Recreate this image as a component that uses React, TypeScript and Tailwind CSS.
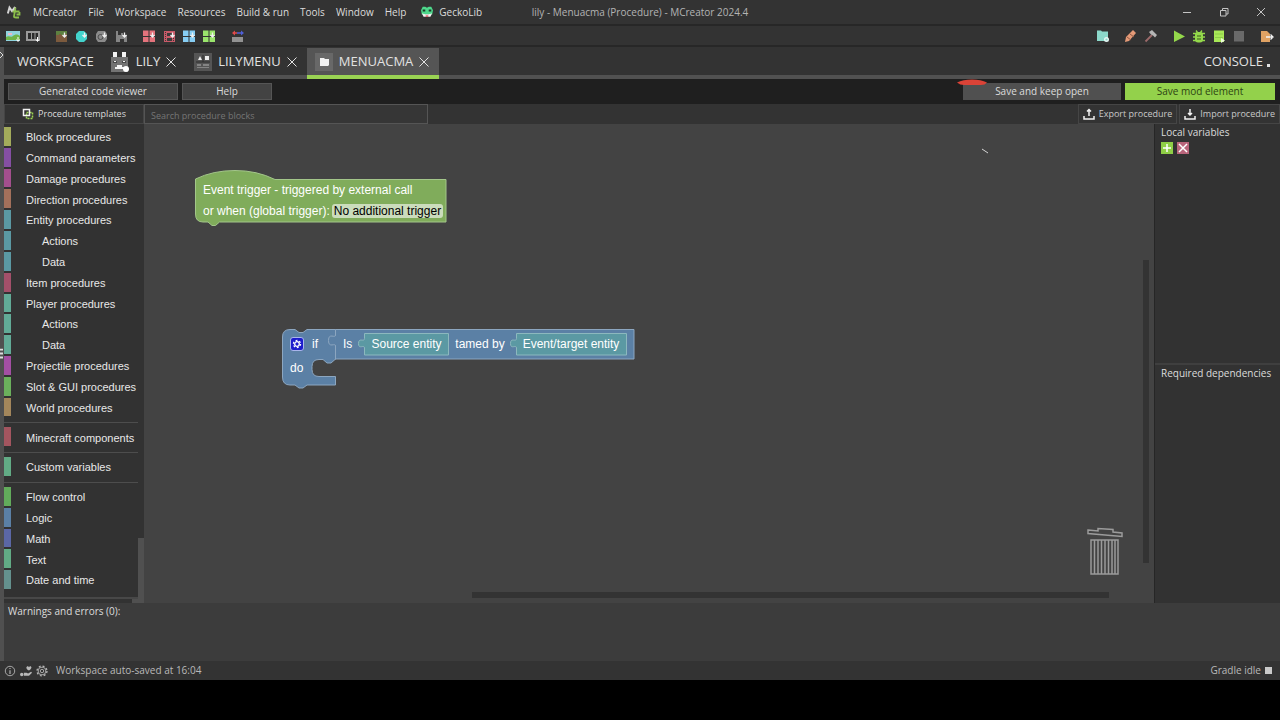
import React from 'react';
import clsx from 'clsx';

const MENU = ['MCreator', 'File', 'Workspace', 'Resources', 'Build & run', 'Tools', 'Window', 'Help'];

interface Category {
  name: string;
  color: string;
  nested?: boolean;
}

const CATEGORY_GROUPS: Category[][] = [
  [
    { name: 'Block procedures', color: 'bg-[#a3ab5b]' },
    { name: 'Command parameters', color: 'bg-[#854fa3]' },
    { name: 'Damage procedures', color: 'bg-[#a34f8d]' },
    { name: 'Direction procedures', color: 'bg-[#a3705b]' },
    { name: 'Entity procedures', color: 'bg-[#5b99a3]' },
    { name: 'Actions', color: 'bg-[#5b99a3]', nested: true },
    { name: 'Data', color: 'bg-[#5b99a3]', nested: true },
    { name: 'Item procedures', color: 'bg-[#a3506a]' },
    { name: 'Player procedures', color: 'bg-[#62ab97]' },
    { name: 'Actions', color: 'bg-[#62ab97]', nested: true },
    { name: 'Data', color: 'bg-[#62ab97]', nested: true },
    { name: 'Projectile procedures', color: 'bg-[#a34fa3]' },
    { name: 'Slot & GUI procedures', color: 'bg-[#6bb05c]' },
    { name: 'World procedures', color: 'bg-[#a3865b]' },
  ],
  [{ name: 'Minecraft components', color: 'bg-[#a3555f]' }],
  [{ name: 'Custom variables', color: 'bg-[#62ab85]' }],
  [
    { name: 'Flow control', color: 'bg-[#62ab5b]' },
    { name: 'Logic', color: 'bg-[#5b80a5]' },
    { name: 'Math', color: 'bg-[#5b67a5]' },
    { name: 'Text', color: 'bg-[#62ab85]' },
    { name: 'Date and time', color: 'bg-[#64918e]' },
  ],
];

interface IconProps {
  children: React.ReactNode;
  className?: string;
}

const Icon: React.FC<IconProps> = ({ children, className = 'w-3.5 h-3.5' }) => (
  <svg viewBox="0 0 14 14" className={clsx('shrink-0', className)} fill="none" aria-hidden="true">
    {children}
  </svg>
);

// small white download arrow in the corner of the import icons
const Arrow = () => <path d="M10.5 3.5v4M8.500 6l2 2 2-2" stroke="#f0f0f0" strokeWidth="1.300" />;

const tiles = (fill: string) => (
  <path d="M1 1.500h5.500V7H1zM7.500 1.500H13V7H7.500zM1 8h5.500v5H1zM7.500 8H13v5H7.500z" fill={fill} />
);

const LEFT_TOOLS: { label: string; icon: React.ReactNode }[][] = [
  [
    {
      label: 'Import texture',
      icon: (
        <>
          <path d="M0 2h14v10H0z" fill="#8fd3de" />
          <path d="M0 8c3-2 5 1 7-1s5-2 7 0v4H0z" fill="#6fb548" />
          <path d="M2 4h4v2H2z" fill="#e8b9c6" />
          <path d="M12 8v4M10.500 10.500l1.500 2 1.500-2" stroke="#fff" />
        </>
      ),
    },
    {
      label: 'Import animation',
      icon: (
        <>
          <path d="M0 2h14v10H0z" fill="#9a9a9a" />
          <path d="M2 4h3v6H2zM6 4h2.500v6H6zM9.500 4H12v6H9.500z" fill="#2c2c2c" />
          <path d="M11.500 8v4M10 10.500l1.500 2 1.500-2" stroke="#fff" />
        </>
      ),
    },
  ],
  [
    {
      label: 'Import block',
      icon: (
        <>
          <path d="M2 2h11v11H2z" fill="#7c5a3d" />
          <path d="M2 2h11v3h-3v1H7V5H5v1H2z" fill="#5d8040" />
          <Arrow />
        </>
      ),
    },
    {
      label: 'Import item',
      icon: (
        <>
          <path d="M5 2h5l3 3v5l-3 3H5L2 10V5z" fill="#43d3cc" />
          <Arrow />
        </>
      ),
    },
    {
      label: 'Import sound',
      icon: (
        <>
          <path d="M4 2h7l2 3v5l-2 3H4l-2-3V5z" fill="#8b8b8b" />
          <circle cx="6.500" cy="8" r="2.500" stroke="#4b4b4b" />
          <Arrow />
        </>
      ),
    },
    {
      label: 'Import structure',
      icon: (
        <>
          <path d="M2 2h2v4h3V4h2v2h4v7h-3v-3H6v3H2z" fill="#858585" />
          <Arrow />
        </>
      ),
    },
  ],
  [
    { label: 'Import model', icon: <>{tiles('#e4737c')}<Arrow /></> },
    {
      label: 'Import Java model',
      icon: (
        <>
          <path d="M2 2h11v11H2z" fill="#c95a68" />
          <path d="M5 4h5v3H5zM5 9h5v3H5z" fill="#3b3b3b" />
          <path d="M3.500 3v10M11.500 9v4" stroke="#3b3b3b" strokeDasharray="1 1" />
          <Arrow />
        </>
      ),
    },
    { label: 'Import JSON model', icon: <>{tiles('#86cdf3')}<Arrow /></> },
    { label: 'Import OBJ model', icon: <>{tiles('#9ae56c')}<Arrow /></> },
  ],
  [
    {
      label: 'Animation mapping',
      icon: (
        <>
          <path d="M2 8h11v5H2z" fill="#929292" />
          <path d="M4 4h3" stroke="#e24b4b" strokeWidth="1.500" />
          <path d="M7 4h4" stroke="#5060d8" strokeWidth="1.500" />
          <path d="M5 1.500 2 4l3 2.500z" fill="#e24b4b" />
          <path d="m11 1.500 3 2.500-3 2.500z" fill="#5060d8" />
        </>
      ),
    },
  ],
];

const RIGHT_TOOLS: { label: string; icon: React.ReactNode }[][] = [
  [
    {
      label: 'Workspace settings',
      icon: (
        <>
          <path d="M1 1.500h4l1 1h6v9.500H1z" fill="#8cd9cb" />
          <circle cx="10.500" cy="10.500" r="1.800" stroke="#e8f7f4" strokeWidth="1.400" />
        </>
      ),
    },
  ],
  [
    {
      label: 'Clean',
      icon: (
        <>
          <path d="m9 1 3 3-7 8-4 1 1-5z" fill="#e59a77" />
          <path d="m3 8 4 3M6 5l4 3" stroke="#8f5a44" />
        </>
      ),
    },
    {
      label: 'Build',
      icon: (
        <>
          <path d="M1.500 12.500 8 6" stroke="#9c6a6a" strokeWidth="1.800" />
          <path d="m5 3 3-2 5 5-2 2.500-2-2-2-1z" fill="#b5b5b5" />
        </>
      ),
    },
  ],
  [
    { label: 'Run client', icon: <path d="M2 1.500v11.500l11-5.500z" fill="#94d84b" /> },
    {
      label: 'Debug client',
      icon: (
        <>
          <path d="M1 4.500h12M1 8h12M1 11.500h12M4 1.500l1.500 2M10 1.500l-1.500 2" stroke="#94d84b" strokeWidth="1.300" />
          <rect x="3" y="3" width="8" height="10.500" rx="3" fill="#94d84b" />
          <path d="M5 7h4M5 10h4" stroke="#3a5a1c" />
        </>
      ),
    },
    {
      label: 'Run server',
      icon: (
        <>
          <path d="M2 1.500h10V13H2z" fill="#a8e857" />
          <path d="M3 5h8M3 8.500h8" stroke="#8ccb48" />
          <path d="m9 9 4 2.500L9 14z" fill="#eafbd6" />
        </>
      ),
    },
    { label: 'Stop', icon: <path d="M2 2h10v10.500H2z" fill="#6a6a6a" /> },
  ],
  [
    {
      label: 'Export mod',
      icon: (
        <>
          <path d="M1 2h6l3 3v8H1z" fill="#e0a263" />
          <path d="M6 8h6M10.500 5.500 13 8l-2.500 2.500" stroke="#f4f4f4" strokeWidth="1.300" />
        </>
      ),
    },
  ],
];

const ToolGroups = ({ groups }: { groups: typeof LEFT_TOOLS }) => (
  <div className="flex items-center gap-3.5">
    {groups.map((group, i) => (
      <div key={i} className="flex gap-1.5">
        {group.map((tool) => (
          <button key={tool.label} aria-label={tool.label}>
            <Icon>{tool.icon}</Icon>
          </button>
        ))}
      </div>
    ))}
  </div>
);

const TitleBar = () => (
  <header className="relative flex items-center h-[26px] pl-[7px] border-b-2 border-[#272727] text-[10px] text-[#dcdcdc]">
    <Icon className="w-3.5 h-3.5">
      <path d="M.8 8.500 2.500 2.500 5 6l3-4-1 5" stroke="#d5d5d5" strokeWidth="2" />
      <path d="M8.500 2.500 7 11.500q0 1 2 1h3M5.500 6.500h7M9.500 9.500h3V7" stroke="#8bbd4a" strokeWidth="1.800" />
    </Icon>
    <nav className="flex items-center gap-[11px] ml-3">
      {MENU.map((item) => (
        <button key={item}>{item}</button>
      ))}
      <button className="flex items-center gap-1.5 pl-1">
        <Icon className="w-3 h-3">
          <path d="M2 1h3l2 1 2-1h3l2 4-1 5H1L0 5z" fill="#4fd98c" />
          <path d="M1 8.500c3 1.500 9 1.500 12 0l-2 4H3z" fill="#f2f2f2" />
          <path d="M2 4h3v2.500H2zM9 4h3v2.500H9z" fill="#1b3d2a" />
          <path d="M5.500 11h3v1.500h-3z" fill="#d9484f" />
        </Icon>
        GeckoLib
      </button>
    </nav>
    <h1 className="absolute inset-y-0 left-1/2 -translate-x-1/2 flex items-center text-[#b4b4b4] pointer-events-none">
      lily - Menuacma (Procedure) - MCreator 2024.4
    </h1>
    <div className="flex gap-[27px] ml-auto pr-3.5 text-[#c4c4c4]">
      <button aria-label="Minimize">
        <svg viewBox="0 0 10 10" className="w-2.5 h-2.5" stroke="currentColor"><path d="M1 5.500h8" /></svg>
      </button>
      <button aria-label="Restore">
        <svg viewBox="0 0 10 10" className="w-2.5 h-2.5" stroke="currentColor" fill="none">
          <path d="M1.500 3.500h5.500v5.500H1.500zM3.500 3.500v-2H9V7H7" />
        </svg>
      </button>
      <button aria-label="Close">
        <svg viewBox="0 0 10 10" className="w-2.5 h-2.5" stroke="currentColor"><path d="m1 1 8 8M9 1 1 9" /></svg>
      </button>
    </div>
  </header>
);

interface TabProps {
  label: string;
  active?: boolean;
  children: React.ReactNode;
}

const Tab: React.FC<TabProps> = ({ label, active, children }) => (
  <div
    className={clsx(
      'flex items-center gap-1.5 pl-2 pr-2.5 border-b-4',
      active ? 'bg-[#555555] border-[#9ad353]' : 'border-[#515151]'
    )}
  >
    <button className="flex items-center gap-1.5">
      {children}
      {label}
    </button>
    <button aria-label={`Close ${label}`}>
      <svg viewBox="0 0 10 10" className="w-2.5 h-2.5" stroke="currentColor"><path d="m.5.5 9 9M9.500.5l-9 9" /></svg>
    </button>
  </div>
);

const Tabs = () => (
  <div className="flex h-[31px] text-[13px] text-[#e2e2e2]">
    <button className="pl-[13px] pr-2 border-b-4 border-[#515151]">WORKSPACE</button>
    <Tab label="LILY">
      <svg viewBox="0 0 20 20" className="w-5 h-5" aria-hidden="true">
        <path d="M1 5h17v15H1z" fill="#737373" />
        <path d="M3 0h4v5H3zM12 0h4v5h-4z" fill="#f4f4f4" />
        <path d="M3 9h4v2H3zM12 9h4v2h-4z" fill="#4a4a4a" />
        <path d="M4 9h2v1H4zM13 9h2v1h-2zM7 13h5v2h2v2H5v-2h2z" fill="#f4f4f4" />
        <circle cx="16" cy="17" r="3" fill="#fff" />
      </svg>
    </Tab>
    <Tab label="LILYMENU">
      <svg viewBox="0 0 18 18" className="w-[18px] h-[18px]" aria-hidden="true">
        <path d="M0 0h18v18H0z" fill="#555" />
        <path d="M4 7l2-4 2 4zM11 3h4v4h-4z" fill="#ececec" />
        <path d="M2 9h14M9 2v7" stroke="#2d2d2d" />
        <path d="M3 11h4v2H3zM9 11h6v2H9zM3 14h12v1H3z" fill="#848484" />
      </svg>
    </Tab>
    <Tab label="MENUACMA" active>
      <svg viewBox="0 0 18 18" className="w-[18px] h-[18px]" aria-hidden="true">
        <path d="M0 0h18v18H0z" fill="#686868" />
        <path d="M5 5h4l1 1h4v6l-1 1H5z" fill="#f2f2f2" />
      </svg>
    </Tab>
    <div className="flex-1 border-b-4 border-[#515151]" />
    <button className="flex items-center gap-1 pl-3 pr-2.5 border-b-4 border-[#515151]">
      CONSOLE
      <span className="w-[3px] h-[3px] mt-2 bg-[#e2e2e2]" />
    </button>
  </div>
);

const ActionBar = () => (
  <div className="flex h-[25px] gap-1 pt-1 pb-1 pl-1 pr-[5px] bg-[#1f1f1f] text-[10px] text-[#dcdcdc]">
    <button className="w-[170px] bg-[#434343] border border-[#555555]">Generated code viewer</button>
    <button className="w-[90px] bg-[#434343] border border-[#555555]">Help</button>
    <div className="relative ml-auto flex">
      <button className="w-[158px] bg-[#505050]">Save and keep open</button>
      <svg viewBox="0 0 30 7" className="absolute -left-1.5 -top-1 w-[30px] h-[7px]" aria-hidden="true">
        <path d="M0 3.500Q6 .5 15 .5t15 3Q28 6 24 6H7Q3 6 0 3.500z" fill="#db4337" />
      </svg>
    </div>
    <button className="w-[150px] bg-[#93d14b] text-[#2d4313]">Save mod element</button>
  </div>
);

const FilterBar = () => (
  <div className="flex h-5 text-[9px] text-[#c9c9c9]">
    <button className="flex items-center justify-center gap-1 w-[140px] border border-[#454545] text-[#dcdcdc]">
      <svg viewBox="0 0 12 12" className="w-3 h-3" fill="none" aria-hidden="true">
        <path d="M4.500 4.500h6v6h-6z" stroke="#9ad353" strokeWidth="1.500" strokeDasharray="2 1" />
        <path d="M1.500 1.500h6v6h-6z" stroke="#f2f2f2" strokeWidth="1.500" />
      </svg>
      Procedure templates
    </button>
    <input
      aria-label="Search procedure blocks"
      placeholder="Search procedure blocks"
      className="w-[284px] px-1.5 pt-1 bg-[#363636] border border-[#555555] outline-none placeholder:text-[#757575]"
    />
    <button className="flex items-center gap-1 ml-auto px-1 border border-[#454545]">
      <svg viewBox="0 0 12 12" className="w-3 h-3" fill="none" stroke="#f2f2f2" strokeWidth="1.500" aria-hidden="true">
        <path d="M1 8v3h10V8M6 8V2M4 3.500l2-2 2 2" />
      </svg>
      Export procedure
    </button>
    <button className="flex items-center gap-1 ml-0.5 px-1 border border-[#454545]">
      <svg viewBox="0 0 12 12" className="w-3 h-3" fill="none" stroke="#f2f2f2" strokeWidth="1.500" aria-hidden="true">
        <path d="M1 8v3h10V8M6 1v6M4 5l2 2 2-2" />
      </svg>
      Import procedure
    </button>
  </div>
);

const Toolbox = () => (
  <aside className="relative flex flex-col w-[140px] pt-[3px] pb-3 bg-[#323232] font-['Liberation_Sans',sans-serif] text-[11px] text-[#e8e8e8]">
    {CATEGORY_GROUPS.map((group, i) => (
      <React.Fragment key={i}>
        {i > 0 && (
          <div className="flex items-center h-[9px]">
            <hr className="w-[134px] border-[#4d4d4d]" />
          </div>
        )}
        {group.map((category, j) => (
          <button key={j} className="flex flex-1 items-stretch min-h-5 text-left whitespace-nowrap">
            <span className={clsx('shrink-0 w-[7px] mb-0.5', category.color)} />
            <span className={clsx('self-center', category.nested ? 'pl-[31px]' : 'pl-[15px]')}>{category.name}</span>
          </button>
        ))}
      </React.Fragment>
    ))}
    <div className="absolute left-0 bottom-1 w-[134px] h-0.5 bg-[#484848]" />
    <div className="absolute right-0 bottom-0 w-1.5 h-[65px] bg-[#505050]" />
    <div className="absolute right-0 bottom-0 w-3 h-1 bg-[#505050]" />
  </aside>
);

// Blocks are nodes on the free canvas, so they carry their own coordinates
const Canvas = () => (
  <main className="relative flex-1 overflow-hidden bg-[#434343] font-['Liberation_Sans',sans-serif] text-[12px] text-white">
    <div className="absolute left-[51px] top-[46px] w-[252px] h-[57px]">
      <svg viewBox="0 0 252 57" className="absolute inset-0 w-full h-full" aria-hidden="true">
        <path
          d="M.5 9Q18 .5 40 .5T80 9.500H251V52H24.500l-4 3.500h-3.500L13 52H8Q.5 52 .5 44z"
          fill="#80ac5b"
          stroke="#a3c68a"
        />
      </svg>
      <div className="relative flex flex-col gap-[5px] pt-3 pl-2 whitespace-nowrap">
        <span className="leading-4">Event trigger - triggered by external call</span>
        <div className="flex items-center gap-0.5 leading-4">
          <span>or when (global trigger):</span>
          <button className="px-0.5 h-3.5 leading-3.5 rounded-[3px] bg-[#cbdcbc] text-black">No additional trigger</button>
        </div>
      </div>
    </div>

    <div className="absolute left-[138px] top-[205px] w-[353px] h-[60px]">
      <svg viewBox="0 0 353 60" className="absolute inset-0 w-full h-full" fill="#5b80a5" stroke="#8ca6c0" aria-hidden="true">
        <path d="M8 .5h5l4 3h4l4-3H53.500V30.500H53l-4 3.500h-4l-4-3.500h-4q-7 0-7 7v3q0 7 7 7H53.500V56H25l-4 3h-4l-4-3H8Q.5 56 .5 48V8Q.5 .5 8 .5z" />
        <path d="M53.500.5H352V30H53.500V17c0-4-7 3-7-5.500s7-1.500 7-5.500z" />
        <g fill="#5b99a3" stroke="#8cb8be">
          <path d="M82.500 4.500H166.500V26H82.500V19c0-4-6 2-6-4.500s6-1 6-5z" />
          <path d="M234.500 4.500H344.500V26H234.500V19c0-4-6 2-6-4.500s6-1 6-5z" />
        </g>
      </svg>
      <div className="relative flex items-center h-[30px] pl-2 whitespace-nowrap">
        <button aria-label="Edit if block">
          <svg viewBox="0 0 14 14" className="w-3.5 h-3.5" aria-hidden="true">
            <rect x=".5" y=".5" width="13" height="13" rx="2.500" fill="#1c1ccc" stroke="#a9b5ec" />
            <circle cx="7" cy="7" r="2.300" fill="none" stroke="#fff" strokeWidth="1.300" />
            <circle cx="7" cy="7" r="3.600" fill="none" stroke="#fff" strokeWidth="1.200" strokeDasharray="1.900 1.870" />
          </svg>
        </button>
        <span className="w-8 pl-2">if</span>
        <span className="w-[29px] pl-[7px]">Is</span>
        <span className="w-[83px] text-center">Source entity</span>
        <span className="w-[68px] pr-1 text-center">tamed by</span>
        <span className="w-[110px] text-center">Event/target entity</span>
      </div>
      <span className="relative block pl-2">do</span>
    </div>

    <svg viewBox="0 0 8 6" className="absolute right-[165px] top-6 w-2 h-1.5" stroke="#d5d5d5" aria-hidden="true">
      <path d="m1 1 6 4" />
    </svg>
    <svg viewBox="0 0 36 48" className="absolute right-[31px] bottom-7 w-9 h-12" fill="none" stroke="#9b9b9b" aria-hidden="true">
      <path d="m1 3 10 1V1.500l15 1V5l9 1v3.500L1 6.500z" strokeWidth="1.500" />
      <path d="M4 13h27v34H4z" strokeWidth="1.500" />
      <path d="M7.500 13v34M11 13v34M14.500 13v34M18 13v34M21.500 13v34M25 13v34M28 13v34" strokeWidth="1.500" />
    </svg>
    <div className="absolute right-[5px] top-[136px] bottom-10 w-1.5 bg-[#333333]" />
    <div className="absolute left-[328px] right-[45px] bottom-[5px] h-1.5 bg-[#333333]" />
  </main>
);

const SidePanel = () => (
  <aside className="flex flex-col w-[126px] border-l border-[#262626] bg-[#323232] text-[10px] text-[#dcdcdc]">
    <section className="flex-1 pl-1.5 border-b-2 border-[#3f3f3f]">
      <h2 className="leading-4">Local variables</h2>
      <div className="flex gap-1 pt-0.5">
        <button aria-label="Add variable">
          <svg viewBox="0 0 12 12" className="w-3 h-3" aria-hidden="true">
            <path d="M0 0h12v12H0z" fill="#8fce46" />
            <path d="M6 2v8M2 6h8" stroke="#fff" strokeWidth="1.500" />
          </svg>
        </button>
        <button aria-label="Remove variable">
          <svg viewBox="0 0 12 12" className="w-3 h-3" aria-hidden="true">
            <path d="M0 0h12v12H0z" fill="#b8647a" />
            <path d="m2 2 8 8M10 2l-8 8" stroke="#fff" strokeWidth="1.500" />
          </svg>
        </button>
      </div>
    </section>
    <section className="flex-1 pl-1.5">
      <h2 className="leading-4">Required dependencies</h2>
    </section>
  </aside>
);

const StatusBar = () => (
  <footer className="flex items-center h-[19px] px-1 gap-1 text-[10px] text-[#b9b9b9]">
    <button aria-label="About">
      <Icon className="w-3 h-3">
        <circle cx="7" cy="7" r="5.500" stroke="currentColor" />
        <path d="M7 6v4.500M7 3.500v1.300" stroke="currentColor" strokeWidth="1.300" />
      </Icon>
    </button>
    <button aria-label="Donate">
      <Icon className="w-3 h-3">
        <path d="M10.500 6.500C7 4.500 7 3 8 2s2 0 2.500.7C11 2 12 1 13 2s0 2.500-2.500 4.500z" fill="currentColor" />
        <circle cx="2" cy="11" r="2" fill="currentColor" />
        <path d="M4.500 9h3l2 .8L13 8l1 1-3.500 3.500h-6z" fill="currentColor" />
      </Icon>
    </button>
    <button aria-label="Preferences">
      <Icon className="w-3 h-3">
        <circle cx="7" cy="7" r="2" stroke="currentColor" />
        <circle cx="7" cy="7" r="4.500" stroke="currentColor" />
        <circle cx="7" cy="7" r="5.800" stroke="currentColor" strokeWidth="1.500" strokeDasharray="2.300 2.250" />
      </Icon>
    </button>
    <span className="ml-1">Workspace auto-saved at 16:04</span>
    <span className="ml-auto">Gradle idle</span>
    <span className="w-[7px] h-[7px] mr-1 bg-[#c9c9c9]" />
  </footer>
);

const App: React.FC = () => (
  <div className="flex flex-col min-h-screen pb-10 bg-black font-['Open_Sans',sans-serif] whitespace-nowrap">
    <div className="flex flex-1 flex-col bg-[#333333]">
      <TitleBar />
      <div className="flex items-center justify-between h-[21px] px-1.5 border-b-2 border-[#272727]">
        <ToolGroups groups={LEFT_TOOLS} />
        <ToolGroups groups={RIGHT_TOOLS} />
      </div>
      <div className="flex flex-1">
        <div className="relative w-1 bg-[#505050]">
          <svg viewBox="0 0 4 8" className="absolute left-0 top-1 w-1 h-2" fill="none" stroke="#dcdcdc" aria-hidden="true">
            <path d="m0 1 3 3-3 3" />
          </svg>
          <svg viewBox="0 0 4 11" className="absolute left-0 top-1/2 -translate-y-1/2 w-1 h-[11px]" fill="#dcdcdc" aria-hidden="true">
            <path d="M0 0h3v2H0zM0 4h3v2H0zM0 8h3v2H0z" />
          </svg>
        </div>
        <div className="flex flex-1 flex-col min-w-0 pt-px">
          <Tabs />
          <ActionBar />
          <FilterBar />
          <div className="flex flex-1">
            <Toolbox />
            <Canvas />
            <SidePanel />
          </div>
          <section className="h-[58px] pl-1 bg-[#3c3c3c] text-[10px] text-[#dcdcdc]">
            <h2 className="leading-4">Warnings and errors (0):</h2>
          </section>
        </div>
      </div>
      <StatusBar />
    </div>
  </div>
);

export default App;
